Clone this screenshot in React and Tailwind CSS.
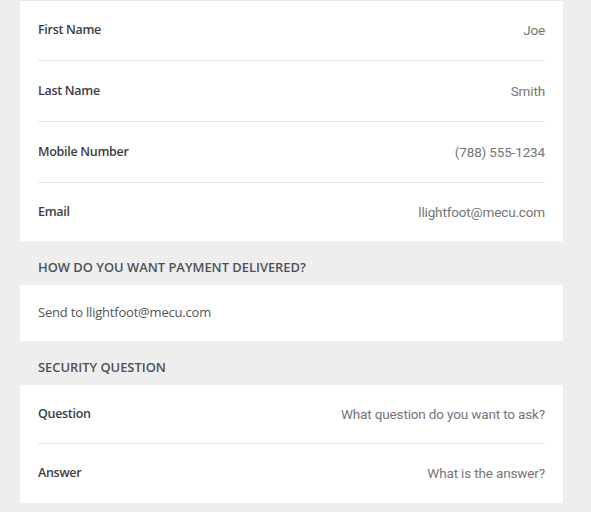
import React from 'react';

const font = { fontFamily: '"Open Sans", "Liberation Sans", sans-serif' };

const Row = ({ label, value, h, last }) => (
  <div className={`flex items-center justify-between ${h} ${last ? '' : 'border-b border-[#e9e9e9]'}`}>
    <div className="text-[12.5px] font-semibold text-[#3c3c46] tracking-[-0.3px]">{label}</div>
    <div className="text-[13.5px] text-[#757575] tracking-[-0.15px]" style={{ fontFamily: 'Roboto, sans-serif' }}>{value}</div>
  </div>
);

const Header = ({ children }) => (
  <div className="h-[44px] flex items-end pb-[8px] px-[38px] text-[12.9px] font-semibold text-[#505057] tracking-[0px] uppercase">
    {children}
  </div>
);

export default function App() {
  return (
    <div className="w-[591px] h-[512px] bg-[#eeeeee] overflow-hidden" style={font}>
      <div className="ml-[20px] w-[543px] bg-white border-t border-[#e6e6e6] px-[18px]">
        <Row label="First Name" value="Joe" h="h-[60px]" />
        <Row label="Last Name" value="Smith" h="h-[61px]" />
        <Row label="Mobile Number" value="(788) 555-1234" h="h-[61px]" />
        <Row label="Email" value="llightfoot@mecu.com" h="h-[58px]" last />
      </div>

      <Header>How do you want payment delivered?</Header>

      <div className="ml-[20px] w-[543px] h-[56px] bg-white px-[18px] flex items-center">
        <div className="text-[13px] text-[#555] tracking-[-0.2px]">Send to llightfoot@mecu.com</div>
      </div>

      <Header>Security question</Header>

      <div className="ml-[20px] w-[543px] bg-white px-[18px]">
        <Row label="Question" value="What question do you want to ask?" h="h-[59px]" />
        <Row label="Answer" value="What is the answer?" h="h-[59px]" last />
      </div>
    </div>
  );
}
